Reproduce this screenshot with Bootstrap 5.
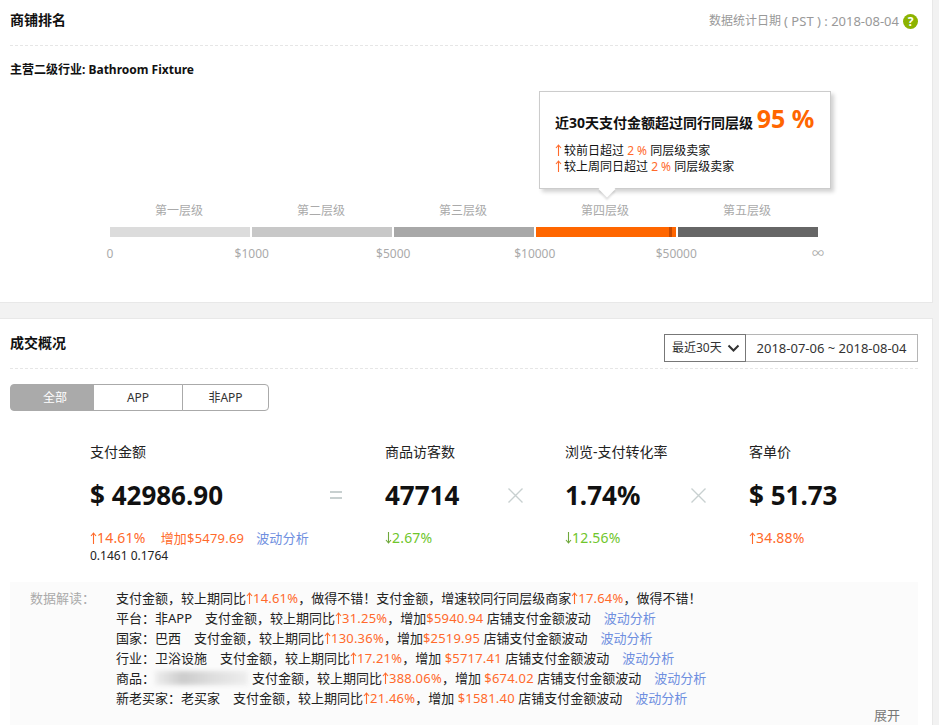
<!DOCTYPE html>
<html lang="zh">
<head>
<meta charset="utf-8">
<title>商铺排名</title>
<link href="https://cdn.jsdelivr.net/npm/bootstrap@5.3.0/dist/css/bootstrap.min.css" rel="stylesheet">
<style>
html,body{height:725px;overflow:hidden}
body{background:#f2f2f2;font-family:"Noto Sans","Noto Sans CJK SC",sans-serif;font-size:13px;color:#333;line-height:20px;width:939px}
.sheet{width:933px;background:#fff;border:1px solid #e8e8e8;border-width:0 1px 1px 0;padding:0 14px 0 10px}
.sheet-rank{height:303px;margin-bottom:15px}
.sheet-deal{height:420px;border-top-width:1px}
.head-rank{height:46px;border-bottom:1px dashed #e6e6e6;padding-top:10px;font-size:14px;font-weight:700;color:#111}
.head-deal{height:50px;border-bottom:1px dashed #e6e6e6;padding-top:14px;font-size:14px;font-weight:700;color:#111}
.stat-date{font-size:12px;font-weight:400;color:#999;line-height:20px;margin-top:1px;white-space:pre}
.stat-num{font-size:13px}
.help-dot{width:15px;height:15px;border-radius:50%;background:#8cb300;color:#fff;font-size:12px;line-height:15px;text-align:center;font-weight:700;margin-left:4px;margin-top:3px}
.industry{font-size:12px;font-weight:700;color:#111;margin-top:14px}
.chart{position:relative;height:170px;margin-top:0}
.tier-wrap{padding-left:100px;padding-top:121px;width:808px}
.tier{width:140px;text-align:center;font-size:12px;color:#aaa;padding-right:2px}
.tier-row,.bar-row{gap:2px}
.bar-row{height:10px;margin-top:6px}
.seg{width:140px;height:10px}
.seg-1{background:#dcdcdc}.seg-2{background:#c8c8c8}.seg-3{background:#a8a8a8}.seg-4{background:#f60;position:relative}.seg-5{background:#666}
.seg-mark{position:absolute;left:133px;top:0;width:3px;height:10px;background:#c84a00}
.scale{font-size:12px;color:#aaa;margin-top:7px;height:20px;position:relative}
.scale-cell{width:142px;text-align:center}
.scale-first{margin-left:71px}
.scale-last{margin-left:71px}
.scale-end{width:0;white-space:nowrap;display:flex;justify-content:center}
.tip{position:absolute;left:529px;top:11px;width:292px;height:98px;background:#fff;border:1px solid #ccc;box-shadow:3px 3px 4px rgba(0,0,0,.18);padding:12px 15px;color:#111;font-size:12px;line-height:16px}
.tip-title{font-size:14px;font-weight:700;line-height:28px;margin-bottom:6px;white-space:nowrap}
.tip-pct{font-size:25px;color:#f60;font-weight:700}
.tip::after{content:"";position:absolute;left:61px;bottom:-7px;width:12px;height:12px;background:#fff;transform:rotate(45deg);box-shadow:2px 2px 2px rgba(0,0,0,.12)}
.hot{color:#ff6a2b;font-weight:400}
.cool{color:#6fc62c}
.arr{display:inline-block;width:7px;height:12px;vertical-align:-1px;stroke:currentColor;fill:none;stroke-width:1.100}
.arr-down{stroke:#6fa83c}
.arr-tip{margin-right:2px}
.linkish{color:#6f8fe0;text-decoration:none}
.range-picker{font-size:12px;font-weight:400;color:#333;margin-top:1px}
.range-select{width:82px;height:28px;border:1px solid #777;padding:0 5px 0 7px;line-height:26px;white-space:nowrap}
.range-date{width:172px;height:28px;border:1px solid #b5b5b5;border-left:0;text-align:center;line-height:26px;font-size:13px}
.tabs-wrap{margin-top:15px}
.tabs-wrap .btn{height:27px;padding:0;font-size:12px;line-height:25px;border-color:#aaa;color:#333;background:#fff;border-radius:4px}
.tabs-wrap .btn.active{background:#aaa;color:#fff;border-color:#aaa}
.tabs-wrap .tab-a{width:84px;padding-left:6px}.tab-b{width:90px}.tab-c{width:87px}
.metrics{padding-left:80px;margin-top:31px}
.mc-1{width:239px}.mc-2{width:123px}.mc-3{width:126px}
.op-1{width:56px;padding-left:1px}.op-2{width:57px}.op-3{width:58px}
.op-eq{display:block;margin-top:49px}
.op-x{display:block;margin-top:46px}
.m-label{font-size:14px;color:#222;line-height:20px}
.m-value{font-size:26px;font-weight:700;color:#111;line-height:32px;margin-top:17px;white-space:nowrap}
.m-delta{font-size:14px;line-height:20px;margin-top:17px;white-space:nowrap;letter-spacing:.2px}
.m-sm{font-size:13px}
.gap-a{margin-left:15px}
.gap-b{margin-left:12px}
.m-extra{font-size:12px;color:#222;line-height:14px;margin-top:1px}
.readout{background:#fbfbfb;margin-top:19px;height:144px;padding:6px 0 0 20px;position:relative;width:908px;white-space:nowrap;font-size:13px;color:#222}
.readout .hot{letter-spacing:.2px}
.read-label{width:86px;color:#aaa}
.smudge{display:inline-block;width:93px;height:14px;vertical-align:-2px;background:linear-gradient(90deg,#eee,#ccc 30%,#ddd 60%,#eee);filter:blur(2px);margin-right:4px}
.unfold{position:absolute;right:18px;top:123px;color:#777;line-height:20px}
</style>
</head>
<body>
<svg class="d-none" aria-hidden="true"><symbol id="up" viewBox="0 0 7 12"><path d="M3.5 12V1M1 4 3.500 1 6 4"/></symbol><symbol id="down" viewBox="0 0 7 12"><path d="M3.5 0V11M1 8 3.500 11 6 8"/></symbol></svg>
<section class="sheet sheet-rank">
  <div class="head-rank d-flex justify-content-between">
    <span>商铺排名</span>
    <span class="stat-date d-flex align-items-start">数据统计日期 <span class="stat-num">( PST ) : 2018-08-04</span><span class="help-dot d-inline-block">?</span></span>
  </div>
  <div class="industry">主营二级行业: Bathroom Fixture</div>
  <div class="chart">
    <div class="tip">
      <div class="tip-title">近30天支付金额超过同行同层级 <span class="tip-pct">95 %</span></div>
      <div><svg class="arr arr-tip hot"><use href="#up"/></svg>较前日超过 <span class="hot">2 %</span> 同层级卖家</div>
      <div><svg class="arr arr-tip hot"><use href="#up"/></svg>较上周同日超过 <span class="hot">2 %</span> 同层级卖家</div>
    </div>
    <div class="tier-wrap">
      <div class="d-flex tier-row">
        <div class="tier">第一层级</div><div class="tier">第二层级</div><div class="tier">第三层级</div><div class="tier">第四层级</div><div class="tier">第五层级</div>
      </div>
      <div class="d-flex bar-row">
        <div class="seg seg-1"></div><div class="seg seg-2"></div><div class="seg seg-3"></div><div class="seg seg-4"><span class="seg-mark"></span></div><div class="seg seg-5"></div>
      </div>
      <div class="scale d-flex">
        <div class="scale-end">0</div>
        <div class="scale-cell scale-first">$1000</div>
        <div class="scale-cell">$5000</div>
        <div class="scale-cell">$10000</div>
        <div class="scale-cell">$50000</div>
        <div class="scale-end scale-last">∞</div>
      </div>
    </div>
  </div>
</section>
<section class="sheet sheet-deal">
  <div class="head-deal d-flex justify-content-between">
    <span>成交概况</span>
    <div class="range-picker d-flex">
      <div class="range-select d-flex justify-content-between align-items-center">最近30天
        <svg width="13" height="9" viewBox="0 0 13 9"><path d="M1.5 1.5 6.5 6.500 11.500 1.500" fill="none" stroke="#333" stroke-width="2"/></svg>
      </div>
      <div class="range-date">2018-07-06 ~ 2018-08-04</div>
    </div>
  </div>
  <div class="tabs-wrap">
    <div class="btn-group" role="group">
      <button type="button" class="btn active tab-a">全部</button>
      <button type="button" class="btn tab-b">APP</button>
      <button type="button" class="btn tab-c">非APP</button>
    </div>
  </div>
  <div class="metrics d-flex">
    <div class="mc-1">
      <div class="m-label">支付金额</div>
      <div class="m-value">$ 42986.90</div>
      <div class="m-delta"><span class="hot"><svg class="arr"><use href="#up"/></svg>14.61%</span><span class="hot m-sm gap-a">增加$5479.69</span><a class="linkish m-sm gap-b" href="#">波动分析</a></div>
      <div class="m-extra">0.1461 0.1764</div>
    </div>
    <div class="op-1"><svg class="op-eq" width="12" height="8" viewBox="0 0 12 8"><path d="M0 1H12M0 7H12" stroke="#c8d0d0" stroke-width="2"/></svg></div>
    <div class="mc-2">
      <div class="m-label">商品访客数</div>
      <div class="m-value">47714</div>
      <div class="m-delta cool"><svg class="arr arr-down"><use href="#down"/></svg>2.67%</div>
    </div>
    <div class="op-2"><svg class="op-x" width="15" height="15" viewBox="0 0 15 15"><path d="M.5.5 14.500 14.500M14.500.5.5 14.500" stroke="#c8d0d0" stroke-width="1.400"/></svg></div>
    <div class="mc-3">
      <div class="m-label">浏览-支付转化率</div>
      <div class="m-value">1.74%</div>
      <div class="m-delta cool"><svg class="arr arr-down"><use href="#down"/></svg>12.56%</div>
    </div>
    <div class="op-3"><svg class="op-x" width="15" height="15" viewBox="0 0 15 15"><path d="M.5.5 14.500 14.500M14.500.5.5 14.500" stroke="#c8d0d0" stroke-width="1.400"/></svg></div>
    <div>
      <div class="m-label">客单价</div>
      <div class="m-value">$ 51.73</div>
      <div class="m-delta hot"><svg class="arr"><use href="#up"/></svg>34.88%</div>
    </div>
  </div>
  <div class="readout d-flex">
    <div class="read-label">数据解读：</div>
    <div>
      <div>支付金额，较上期同比<span class="hot"><svg class="arr"><use href="#up"/></svg>14.61%</span>，做得不错！支付金额，增速较同行同层级商家<span class="hot"><svg class="arr"><use href="#up"/></svg>17.64%</span>，做得不错！</div>
      <div>平台：非APP&emsp;支付金额，较上期同比<span class="hot"><svg class="arr"><use href="#up"/></svg>31.25%</span>，增加<span class="hot">$5940.94</span> 店铺支付金额波动&emsp;<a class="linkish" href="#">波动分析</a></div>
      <div>国家：巴西&emsp;支付金额，较上期同比<span class="hot"><svg class="arr"><use href="#up"/></svg>130.36%</span>，增加<span class="hot">$2519.95</span> 店铺支付金额波动&emsp;<a class="linkish" href="#">波动分析</a></div>
      <div>行业：卫浴设施&emsp;支付金额，较上期同比<span class="hot"><svg class="arr"><use href="#up"/></svg>17.21%</span>，增加 <span class="hot">$5717.41</span> 店铺支付金额波动&emsp;<a class="linkish" href="#">波动分析</a></div>
      <div>商品：<span class="smudge"></span>支付金额，较上期同比<span class="hot"><svg class="arr"><use href="#up"/></svg>388.06%</span>，增加 <span class="hot">$674.02</span> 店铺支付金额波动&emsp;<a class="linkish" href="#">波动分析</a></div>
      <div>新老买家：老买家&emsp;支付金额，较上期同比<span class="hot"><svg class="arr"><use href="#up"/></svg>21.46%</span>，增加 <span class="hot">$1581.40</span> 店铺支付金额波动&emsp;<a class="linkish" href="#">波动分析</a></div>
    </div>
    <div class="unfold">展开</div>
  </div>
</section>
<script src="https://cdn.jsdelivr.net/npm/bootstrap@5.3.0/dist/js/bootstrap.bundle.min.js"></script>
</body>
</html>
